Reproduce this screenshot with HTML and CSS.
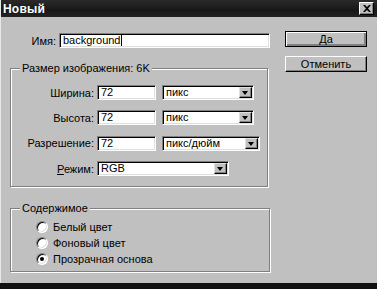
FILE: index.html
```html
<!DOCTYPE html>
<html lang="ru">
<head>
<meta charset="utf-8">
<title>Новый</title>
<link rel="stylesheet" href="styles.css">
</head>
<body>
<div class="window">
  <div class="titlebar">
    <span class="title">Новый</span>
    <span class="close"><svg width="8" height="7" viewBox="0 0 8 7"><path d="M0 0h2l2 2 2-2h2L5 3.5 8 7H6L4 5 2 7H0l3-3.5z" fill="#000"/></svg></span>
  </div>
  <div class="content">
    <div class="main">
      <div class="name-row">
        <span class="name-label">Имя:</span>
        <div class="field name-field">background<span class="caret"></span></div>
      </div>
      <div class="group size-group">
        <div class="legend">Размер изображения: 6K</div>
        <div class="grid">
          <span class="lbl">Ширина:</span>
          <div class="field num">72</div>
          <div class="select unit"><span class="val">пикс</span><span class="arrow"></span></div>
          <span class="lbl">Высота:</span>
          <div class="field num">72</div>
          <div class="select unit"><span class="val">пикс</span><span class="arrow"></span></div>
          <span class="lbl">Разрешение:</span>
          <div class="field num">72</div>
          <div class="select unit wide"><span class="val">пикс/дюйм</span><span class="arrow"></span></div>
          <span class="lbl"><u>Р</u>ежим:</span>
          <div class="select mode"><span class="val">RGB</span><span class="arrow"></span></div>
        </div>
      </div>
      <div class="group contents-group">
        <div class="legend">Содержимое</div>
        <div class="radios">
          <div class="radio-row"><span class="radio"></span><span>Белый цвет</span></div>
          <div class="radio-row"><span class="radio"></span><span>Фоновый цвет</span></div>
          <div class="radio-row"><span class="radio checked"></span><span>Прозрачная основа</span></div>
        </div>
      </div>
    </div>
    <div class="buttons">
      <div class="btn default"><span class="btn-inner"><u>Д</u>а</span></div>
      <div class="btn"><span class="btn-inner">Отменить</span></div>
    </div>
  </div>
</div>
</body>
</html>
```

FILE: styles.css
```css
* { box-sizing: border-box; }
html, body {
  margin: 0;
  padding: 0;
}
body {
  width: 377px;
  height: 289px;
  background: #111;
  overflow: hidden;
  font-family: "Liberation Sans", Arial, sans-serif;
  font-size: 11px;
  color: #000;
}
.window {
  width: 377px;
  height: 283px;
  background: #c0c0c0;
  border-left: 1px solid #e8e8e8;
  display: flex;
  flex-direction: column;
}
.titlebar {
  height: 17px;
  flex: none;
  background: linear-gradient(to bottom, #2a2a2a, #181818 60%, #222);
  display: flex;
  align-items: center;
  justify-content: space-between;
  padding: 0 3px 0 2px;
}
.title {
  color: #fff;
  font-weight: bold;
  font-size: 12px;
  letter-spacing: 0.2px;
}
.close {
  width: 15px;
  height: 13px;
  background: #c0c0c0;
  border: 1px solid;
  border-color: #fff #000 #000 #fff;
  box-shadow: inset -1px -1px 0 #808080;
  display: flex;
  align-items: center;
  justify-content: center;
}
.content {
  display: flex;
  padding: 14px 0 0 9px;
}
.main {
  width: 261px;
  flex: none;
}
.name-row {
  display: flex;
  align-items: center;
  margin-top: 2px;
  gap: 3px;
}
.name-label {
  width: 46px;
  text-align: right;
}
.field {
  height: 15px;
  background: #fff;
  border: 1px solid;
  border-color: #808080 #fff #fff #808080;
  box-shadow: inset 1px 1px 0 #000, inset -1px -1px 0 #dfdfdf;
  padding: 0 3px;
  line-height: 13px;
  white-space: nowrap;
  overflow: hidden;
}
.name-field { width: 211px; }
.caret {
  display: inline-block;
  width: 1px;
  height: 11px;
  background: #000;
  vertical-align: -2px;
}
.group {
  border: 1px solid #808080;
  box-shadow: 1px 1px 0 #fff, inset 1px 1px 0 #fff;
  width: 258px;
}
.legend {
  width: fit-content;
  margin: -7px 0 0 9px;
  padding: 0 2px;
  line-height: 13px;
  background: #c0c0c0;
}
.size-group {
  margin-top: 20px;
  padding-bottom: 10px;
}
.grid {
  margin-top: 10px;
  display: grid;
  grid-template-columns: 86px 59px auto;
  grid-auto-rows: 15px;
  row-gap: 10.4px;
  align-items: center;
}
.lbl {
  text-align: right;
  padding-right: 3px;
  white-space: nowrap;
}
.num { width: 59px; }
.select {
  height: 15px;
  background: #fff;
  border: 1px solid;
  border-color: #808080 #fff #fff #808080;
  box-shadow: inset 1px 1px 0 #000, inset -1px -1px 0 #dfdfdf;
  display: flex;
  align-items: center;
  padding: 1px 1px 1px 3px;
}
.select .val {
  flex: 1;
  line-height: 11px;
  white-space: nowrap;
  overflow: hidden;
}
.arrow {
  width: 13px;
  height: 11px;
  background: #c0c0c0;
  border: 1px solid;
  border-color: #dfdfdf #000 #000 #dfdfdf;
  box-shadow: inset -1px -1px 0 #808080;
  position: relative;
  flex: none;
}
.arrow::after {
  content: "";
  position: absolute;
  left: 2px;
  top: 3px;
  border-left: 3.5px solid transparent;
  border-right: 3.5px solid transparent;
  border-top: 4px solid #000;
}
.unit {
  width: 92px;
  margin-left: 6px;
}
.unit.wide { width: 98px; }
.mode {
  grid-column: 2 / 4;
  width: 132px;
}
.contents-group {
  margin-top: 21px;
  padding-bottom: 4px;
  width: 260px;
}
.radios {
  margin-top: 4px;
  padding-left: 25px;
}
.radio-row {
  display: flex;
  align-items: center;
  height: 16px;
  gap: 5px;
}
.radio {
  width: 12px;
  height: 12px;
  border-radius: 50%;
  background: #fff;
  border: 1px solid;
  border-color: #808080 #fff #fff #808080;
  box-shadow: inset 1px 1px 0 #000, inset -1px -1px 0 #dfdfdf;
  position: relative;
  flex: none;
}
.radio.checked::after {
  content: "";
  position: absolute;
  left: 3px;
  top: 3px;
  width: 4px;
  height: 4px;
  border-radius: 50%;
  background: #000;
}
.buttons {
  margin-left: 14px;
  display: flex;
  flex-direction: column;
  gap: 9px;
}
.btn {
  width: 82px;
  height: 16px;
  background: #c0c0c0;
  border: 1px solid;
  border-color: #fff #000 #000 #fff;
  box-shadow: inset -1px -1px 0 #808080;
  display: flex;
  align-items: center;
  justify-content: center;
}
.btn.default {
  border: 1px solid #000;
  box-shadow: inset 1px 1px 0 #fff, inset -2px -2px 0 #808080;
}
.btn-inner { line-height: 12px; }
```
